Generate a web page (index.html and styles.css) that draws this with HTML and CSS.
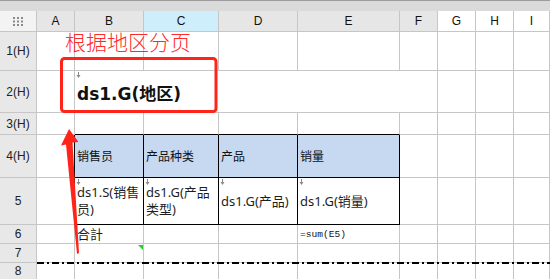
FILE: index.html
```html
<!DOCTYPE html>
<html lang="zh">
<head>
<meta charset="utf-8">
<title>报表设计</title>
<link rel="stylesheet" href="styles.css">
</head>
<body>
<div class="app">
  <div class="tab-edge"></div>
  <div class="sheet">
    <!-- column headers -->
    <div class="corner">
      <svg width="10" height="9" viewBox="0 0 10 9">
        <g fill="#8a8a8a">
          <rect x="0" y="0" width="2" height="2"/><rect x="4" y="0" width="2" height="2"/><rect x="8" y="0" width="2" height="2"/>
          <rect x="0" y="3.5" width="2" height="2"/><rect x="4" y="3.5" width="2" height="2"/><rect x="8" y="3.5" width="2" height="2"/>
          <rect x="0" y="7" width="2" height="2"/><rect x="4" y="7" width="2" height="2"/><rect x="8" y="7" width="2" height="2"/>
        </g>
      </svg>
    </div>
    <div class="colhead">A</div>
    <div class="colhead">B</div>
    <div class="colhead is-active">C</div>
    <div class="colhead">D</div>
    <div class="colhead">E</div>
    <div class="colhead">F</div>
    <div class="colhead is-out">G</div>
    <div class="colhead is-out">H</div>
    <div class="colhead is-out">I</div>

    <!-- row 1 -->
    <div class="rowhead">1(H)</div>
    <div class="cell"></div><div class="cell"></div><div class="cell"></div><div class="cell"></div>
    <div class="cell"></div><div class="cell"></div><div class="cell"></div><div class="cell"></div><div class="cell"></div>

    <!-- row 2 -->
    <div class="rowhead">2(H)</div>
    <div class="cell"></div>
    <div class="cell span-5 group-title">
      <svg class="mark" width="5" height="6" viewBox="0 0 5 6"><path d="M2.5 0V3.5" stroke="#8a8a8a" stroke-width="1"/><path d="M0.5 3L4.5 3L2.5 6Z" fill="#8a8a8a"/></svg>
      ds1.G(地区)
    </div>
    <div class="cell"></div><div class="cell"></div><div class="cell"></div>

    <!-- row 3 -->
    <div class="rowhead">3(H)</div>
    <div class="cell"></div>
    <div class="cell tb-top"></div><div class="cell tb-top"></div><div class="cell tb-top"></div><div class="cell tb-top"></div>
    <div class="cell"></div><div class="cell"></div><div class="cell"></div><div class="cell"></div>

    <!-- row 4 -->
    <div class="rowhead">4(H)</div>
    <div class="cell tb-left"></div>
    <div class="cell tb th">销售员</div>
    <div class="cell tb th">产品种类</div>
    <div class="cell tb th">产品</div>
    <div class="cell tb th">销量</div>
    <div class="cell"></div><div class="cell"></div><div class="cell"></div><div class="cell"></div>

    <!-- row 5 -->
    <div class="rowhead">5</div>
    <div class="cell tb-left"></div>
    <div class="cell tb td">
      <svg class="mark" width="5" height="6" viewBox="0 0 5 6"><path d="M2.5 0V3.5" stroke="#8a8a8a" stroke-width="1"/><path d="M0.5 3L4.5 3L2.5 6Z" fill="#8a8a8a"/></svg>
      <span>ds1.S(销售员)</span>
    </div>
    <div class="cell tb td">
      <svg class="mark" width="5" height="6" viewBox="0 0 5 6"><path d="M2.5 0V3.5" stroke="#8a8a8a" stroke-width="1"/><path d="M0.5 3L4.5 3L2.5 6Z" fill="#8a8a8a"/></svg>
      <span>ds1.G(产品类型)</span>
    </div>
    <div class="cell tb td">
      <svg class="mark" width="5" height="6" viewBox="0 0 5 6"><path d="M2.5 0V3.5" stroke="#8a8a8a" stroke-width="1"/><path d="M0.5 3L4.5 3L2.5 6Z" fill="#8a8a8a"/></svg>
      <span>ds1.G(产品)</span>
    </div>
    <div class="cell tb td">
      <svg class="mark" width="5" height="6" viewBox="0 0 5 6"><path d="M2.5 0V3.5" stroke="#8a8a8a" stroke-width="1"/><path d="M0.5 3L4.5 3L2.5 6Z" fill="#8a8a8a"/></svg>
      <span>ds1.G(销量)</span>
    </div>
    <div class="cell"></div><div class="cell"></div><div class="cell"></div><div class="cell"></div>

    <!-- row 6 -->
    <div class="rowhead">6</div>
    <div class="cell"></div>
    <div class="cell td">合計</div>
    <div class="cell"></div>
    <div class="cell"></div>
    <div class="cell formula">=sum(E5)</div>
    <div class="cell"></div><div class="cell"></div><div class="cell"></div><div class="cell"></div>

    <!-- row 7 -->
    <div class="rowhead">7</div>
    <div class="cell"></div>
    <div class="cell"><span class="note-flag"></span></div>
    <div class="cell"></div><div class="cell"></div><div class="cell"></div>
    <div class="cell"></div><div class="cell"></div><div class="cell"></div><div class="cell"></div>

    <!-- row 8 -->
    <div class="rowhead">8</div>
    <div class="cell"></div><div class="cell"></div><div class="cell"></div><div class="cell"></div>
    <div class="cell"></div><div class="cell"></div><div class="cell"></div><div class="cell"></div><div class="cell"></div>
  </div>

  <!-- overlays: page-break marker and red callout -->
  <div class="callout-title">根据地区分页</div>
  <svg class="callout" width="550" height="279" viewBox="0 0 550 279">
    <line x1="37" y1="263" x2="550" y2="263" stroke="#000" stroke-width="2" stroke-dasharray="7 3 2 3"/>
    <rect x="61.5" y="58.5" width="154.5" height="53" rx="3" ry="3" fill="none" stroke="#ff2419" stroke-width="3"/>
    <polygon points="69,129 78.5,142 72.5,142.5 79,253 77,254 66,144.5 61,145.5" fill="#ff2419"/>
  </svg>
</div>
</body>
</html>
```

FILE: styles.css
```css
html, body {
  margin: 0;
  padding: 0;
  background: #ffffff;
}

.app {
  position: relative;
  width: 550px;
  height: 279px;
  overflow: hidden;
  font-family: "Liberation Sans", "Noto Sans CJK SC", sans-serif;
}

.tab-edge {
  height: 10px;
  border-top: 1px solid #9c9c9c;
  background: #dadada;
}

.sheet {
  display: grid;
  grid-template-columns: 37px 38px 69px 75px 79px 102px 38px 38px 38px 1fr;
  grid-template-rows: 21px 39px 42px 22px 43px 47px 19px 19px 17px;
}

.sheet > div {
  box-sizing: border-box;
  min-width: 0;
}

.corner,
.colhead,
.rowhead,
.cell {
  border-right: 1px solid #c6c6c6;
  border-bottom: 1px solid #c6c6c6;
}

.corner {
  background: #f3f3f3;
  display: flex;
  align-items: center;
  justify-content: center;
  padding-top: 1px;
}

.colhead {
  background: #e6e6e6;
  display: flex;
  align-items: center;
  justify-content: center;
  font-size: 12px;
  color: #111;
}

.colhead.is-active {
  background: #cdeefa;
}

.colhead.is-out {
  background: #ffffff;
}

.rowhead {
  background: #e8e8e8;
  display: flex;
  align-items: center;
  justify-content: center;
  font-size: 12px;
  color: #222;
}

.cell {
  position: relative;
  background: #ffffff;
  display: flex;
  align-items: center;
  padding-left: 2px;
  font-family: "Noto Sans", "Noto Sans CJK SC", sans-serif;
  color: #1e1e1e;
}

.span-5 {
  grid-column: span 5;
}

.group-title {
  font-family: "DejaVu Sans", "Noto Sans CJK SC", sans-serif;
  font-weight: 700;
  font-size: 17px;
  color: #111;
  padding-left: 2px;
  padding-top: 1px;
}

.mark {
  position: absolute;
  left: 1px;
  top: 1px;
}

/* header table B4:E5 */
.tb-top {
  border-bottom-color: #000;
}

.tb-left {
  border-right-color: #000;
}

.tb {
  border-right-color: #000;
  border-bottom-color: #000;
}

.th {
  background: #c6d9f0;
  font-size: 12px;
  color: #111;
}

.td {
  font-size: 13px;
  line-height: 17px;
}

.formula {
  font-family: "Liberation Mono", monospace;
  font-size: 9.6px;
  color: #111;
}

.note-flag {
  position: absolute;
  right: 0;
  top: 1px;
  width: 0;
  height: 0;
  border-top: 5px solid #2ccc2c;
  border-left: 5px solid transparent;
}

.callout {
  position: absolute;
  left: 0;
  top: 0;
  pointer-events: none;
}

.callout-title {
  position: absolute;
  left: 65px;
  top: 32px;
  font-family: "Noto Sans CJK SC", sans-serif;
  font-weight: 300;
  font-size: 21px;
  line-height: 19px;
  color: #ff2a2a;
  white-space: nowrap;
}
```
